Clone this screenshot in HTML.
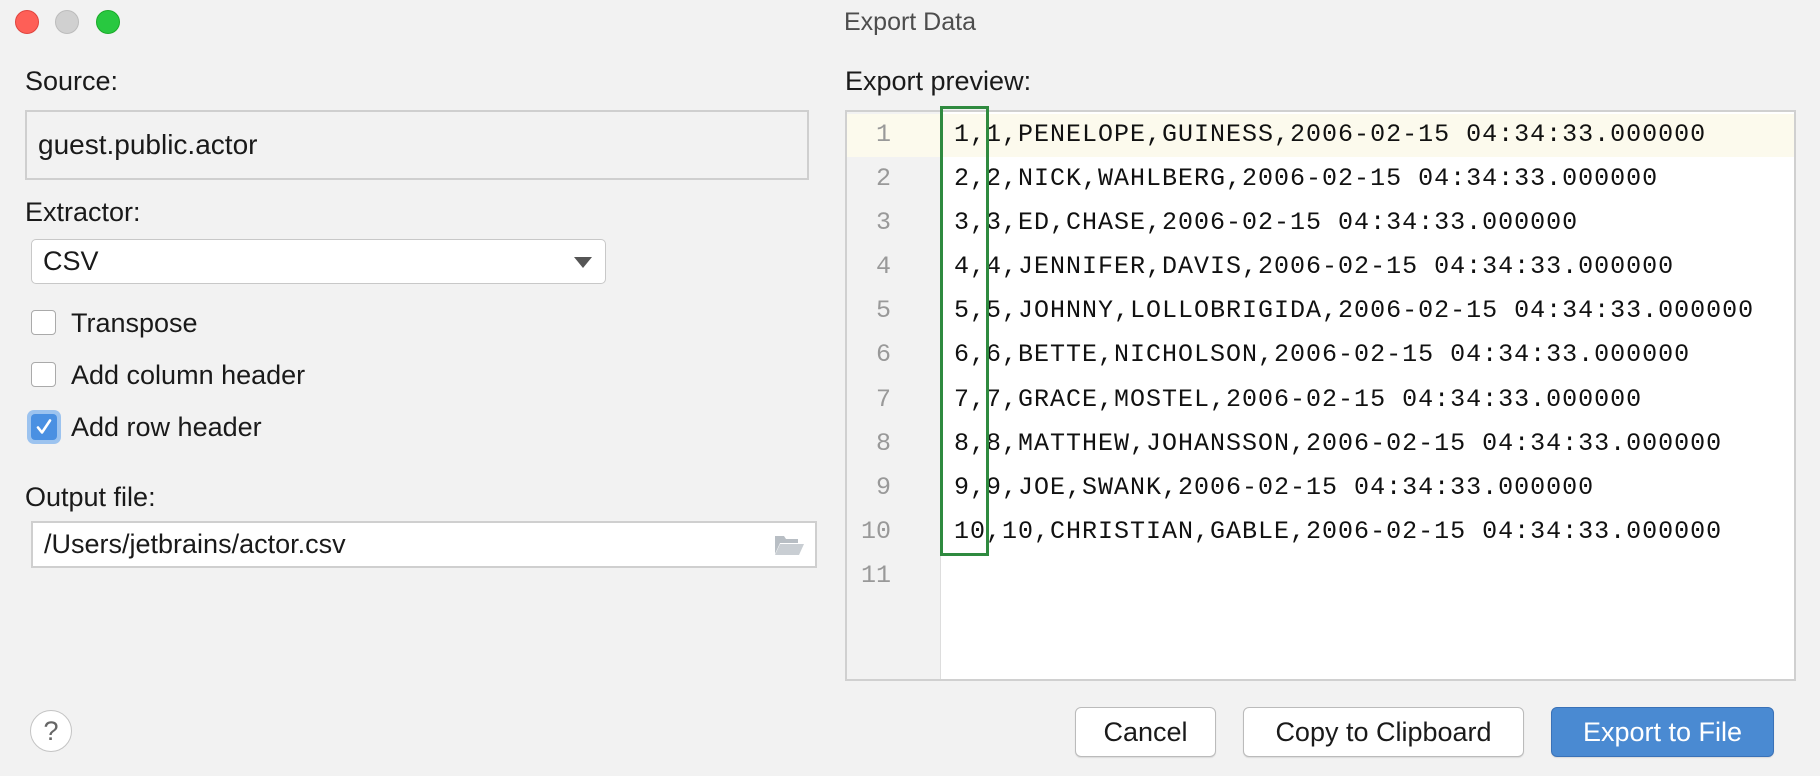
<!DOCTYPE html>
<html><head><meta charset="utf-8"><style>
*{margin:0;padding:0;box-sizing:border-box}
body{width:1820px;height:776px;background:#f2f2f2;font-family:"Liberation Sans",sans-serif;color:#1a1a1a;position:relative;overflow:hidden}
.a{position:absolute}
.lbl{font-size:27px;line-height:30px}
.dot{position:absolute;top:10px;width:24px;height:24px;border-radius:50%}
.cb{position:absolute;left:31px;width:25px;height:25px;background:#fff;border:1.5px solid #aaa;border-radius:4px}
.cl{position:absolute;left:71px;font-size:27px;line-height:30px}
.ln{position:absolute;left:845px;width:46px;text-align:right;color:#999;font-family:"Liberation Mono",monospace;font-size:25px;line-height:28px}
.code{position:absolute;left:954px;font-family:"Liberation Mono",monospace;font-size:25px;letter-spacing:1px;line-height:28px;color:#111;white-space:pre}
.btn{position:absolute;top:707px;height:50px;border:1px solid #bbb;border-radius:6px;background:#fff;font-size:27px;text-align:center;line-height:48px;box-shadow:0 1px 1px rgba(0,0,0,.1)}
</style></head><body>
<div class="dot" style="left:15px;background:#fe5f57;border:1px solid #e0443e"></div>
<div class="dot" style="left:55px;background:#d0d0d0;border:1px solid #bcbcbc"></div>
<div class="dot" style="left:96px;background:#28c840;border:1px solid #1aab29"></div>
<div class="a" style="left:0;width:1820px;top:8px;text-align:center;font-size:25px;color:#4d4d4d">Export Data</div>

<div class="a lbl" style="left:25px;top:66px">Source:</div>
<div class="a" style="left:25px;top:110px;width:784px;height:70px;border:2px solid #cfcfcf;background:#f2f2f2;font-size:28px;line-height:66px;padding-left:11px">guest.public.actor</div>

<div class="a lbl" style="left:25px;top:197px">Extractor:</div>
<div class="a" style="left:31px;top:239px;width:575px;height:45px;border:1.5px solid #c8c8c8;border-radius:5px;background:#fff;font-size:27px;line-height:42px;padding-left:11px">CSV
<div class="a" style="right:13px;top:17px;width:0;height:0;border-left:9px solid transparent;border-right:9px solid transparent;border-top:11px solid #555"></div></div>

<div class="cb" style="top:310px"></div><div class="cl" style="top:308px">Transpose</div>
<div class="cb" style="top:362px"></div><div class="cl" style="top:360px">Add column header</div>
<div class="a" style="left:27px;top:410px;width:34px;height:34px;border-radius:7px;background:#9cc3ef"></div>
<div class="a" style="left:31px;top:414px;width:26px;height:26px;border-radius:4px;background:#4a90e2">
<svg width="26" height="26" viewBox="0 0 26 26"><path d="M7 13.5 L11 18.5 L19 6.5" stroke="#fff" stroke-width="2.6" fill="none" stroke-linecap="round" stroke-linejoin="round"/></svg></div>
<div class="cl" style="top:412px">Add row header</div>

<div class="a lbl" style="left:25px;top:482px">Output file:</div>
<div class="a" style="left:31px;top:521px;width:786px;height:47px;border:2px solid #cfcfcf;background:#fff;font-size:27px;line-height:43px;padding-left:11px">/Users/jetbrains/actor.csv
<svg class="a" style="right:10px;top:10px" width="32" height="24" viewBox="0 0 32 24"><path d="M2 3h9l2 3h12v4H7L2 21z" fill="#b8bec4"/><path d="M7 11h24l-5 11H2z" fill="#c9ced3"/></svg></div>

<div class="a lbl" style="left:845px;top:66px">Export preview:</div>
<div class="a" style="left:845px;top:110px;width:951px;height:571px;border:2px solid #d0d0d0;background:#fff"></div>
<div class="a" style="left:847px;top:112px;width:94px;height:567px;background:#f2f2f2;border-right:1px solid #ddd"></div>
<div class="a" style="left:847px;top:114px;width:947px;height:43px;background:#fcfaed"></div>

<div class="ln" style="top:121px">1</div>
<div class="ln" style="top:165px">2</div>
<div class="ln" style="top:209px">3</div>
<div class="ln" style="top:253px">4</div>
<div class="ln" style="top:297px">5</div>
<div class="ln" style="top:341px">6</div>
<div class="ln" style="top:386px">7</div>
<div class="ln" style="top:430px">8</div>
<div class="ln" style="top:474px">9</div>
<div class="ln" style="top:518px">10</div>
<div class="ln" style="top:562px">11</div>

<div class="code" style="top:121px">1,1,PENELOPE,GUINESS,2006-02-15 04:34:33.000000</div>
<div class="code" style="top:165px">2,2,NICK,WAHLBERG,2006-02-15 04:34:33.000000</div>
<div class="code" style="top:209px">3,3,ED,CHASE,2006-02-15 04:34:33.000000</div>
<div class="code" style="top:253px">4,4,JENNIFER,DAVIS,2006-02-15 04:34:33.000000</div>
<div class="code" style="top:297px">5,5,JOHNNY,LOLLOBRIGIDA,2006-02-15 04:34:33.000000</div>
<div class="code" style="top:341px">6,6,BETTE,NICHOLSON,2006-02-15 04:34:33.000000</div>
<div class="code" style="top:386px">7,7,GRACE,MOSTEL,2006-02-15 04:34:33.000000</div>
<div class="code" style="top:430px">8,8,MATTHEW,JOHANSSON,2006-02-15 04:34:33.000000</div>
<div class="code" style="top:474px">9,9,JOE,SWANK,2006-02-15 04:34:33.000000</div>
<div class="code" style="top:518px">10,10,CHRISTIAN,GABLE,2006-02-15 04:34:33.000000</div>

<div class="a" style="left:940px;top:106px;width:49px;height:450px;border:3px solid #2f8a3f"></div>

<div class="a" style="left:30px;top:710px;width:42px;height:42px;border-radius:50%;border:1.5px solid #c4c4c4;background:#fff;text-align:center;font-size:27px;line-height:40px;color:#666">?</div>
<div class="btn" style="left:1075px;width:141px">Cancel</div>
<div class="btn" style="left:1243px;width:281px">Copy to Clipboard</div>
<div class="btn" style="left:1551px;width:223px;background:#4a8ad2;border-color:#3a72b8;color:#fff">Export to File</div>
</body></html>
